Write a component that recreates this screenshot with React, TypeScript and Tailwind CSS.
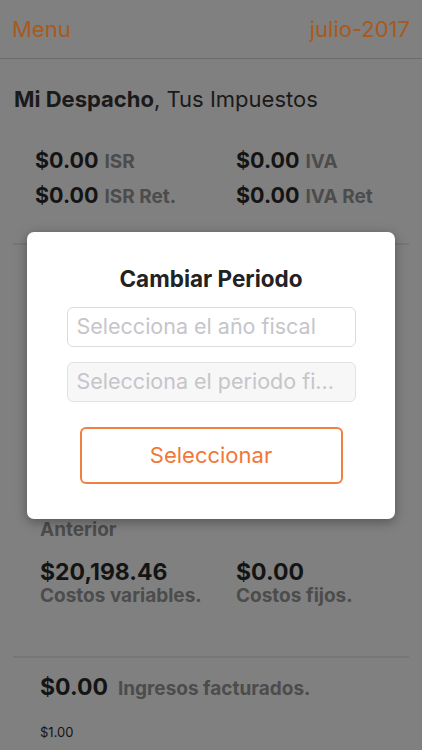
import React from "react";

const font = { fontFamily: "Inter, 'Noto Sans', sans-serif" };

function Amount({ value, label }: { value: string; label: string }) {
  return (
    <div className="flex h-[30px] items-baseline gap-[6px]">
      <span className="text-[21.5px] font-bold leading-[30px] text-[#141414]">{value}</span>
      <span className="text-[19px] font-bold leading-[30px] text-[#4c4c4c]">{label}</span>
    </div>
  );
}

function Stacked({ value, label }: { value: string; label: string }) {
  return (
    <div className="flex flex-col leading-[24px]">
      <span className="text-[23px] font-bold text-[#141414]">{value}</span>
      <span className="text-[19px] font-bold text-[#4c4c4c]">{label}</span>
    </div>
  );
}

export default function App() {
  return (
    <div className="relative h-[750px] w-[422px] overflow-hidden bg-[#808080]" style={font}>
      {/* header */}
      <div className="flex h-[59px] items-center justify-between border-b border-[#6b6b6b] px-3">
        <span className="text-[22px] leading-[28px] text-[#a85a1c]">Menu</span>
        <span className="text-[22px] leading-[28px] text-[#a85a1c]">julio-2017</span>
      </div>

      <div className="px-[14px] pt-[27px]">
        <h1 className="text-[22px] leading-[27px] text-[#1a1a1a]">
          <span className="font-bold">Mi Despacho</span>, Tus Impuestos
        </h1>
      </div>

      <div className="grid grid-cols-[201px_1fr] gap-y-[5px] pl-[35px] pt-[32px] pb-[33px]">
        <Amount value="$0.00" label="ISR" />
        <Amount value="$0.00" label="IVA" />
        <Amount value="$0.00" label="ISR Ret." />
        <Amount value="$0.00" label="IVA Ret" />
      </div>

      <div className="mx-[13px] border-t-2 border-[#767676]" />

      {/* content hidden by the dialog */}
      <div className="grid grid-cols-[196px_1fr] pl-[40px] pt-[252px] leading-[22px]">
        <div className="flex flex-col text-[19px] font-bold text-[#4c4c4c]">
          <span>Utilidad Periodo</span>
          <span>Anterior</span>
        </div>
        <div className="flex flex-col text-[19px] font-bold text-[#4c4c4c]">
          <span>Utilidad Periodo.</span>
        </div>
      </div>

      <div className="grid grid-cols-[196px_1fr] pl-[40px] pt-[19px]">
        <Stacked value="$20,198.46" label="Costos variables." />
        <Stacked value="$0.00" label="Costos fijos." />
      </div>

      <div className="mx-[13px] mt-[48px] border-t-2 border-[#767676]" />

      <div className="pl-[40px] pt-[14px]">
        <div className="flex h-[30px] items-baseline gap-[10px]">
          <span className="text-[23px] font-bold leading-[30px] text-[#141414]">$0.00</span>
          <span className="text-[19px] font-bold leading-[30px] text-[#4c4c4c]">Ingresos facturados.</span>
        </div>
        <div className="pt-[21px] text-[13px] leading-[18px] text-[#141414]">$1.00</div>
      </div>

      {/* dialog */}
      <div className="absolute inset-0 flex items-center justify-center">
        <div className="flex h-[287px] w-[368px] flex-col items-center rounded-[7px] bg-white pt-[33px] shadow-[0_3px_12px_rgba(0,0,0,0.35)]">
          <h2 className="text-[22.5px] font-bold leading-[28px] text-[#222222]">Cambiar Periodo</h2>
          <div className="mt-[14px] flex h-[40px] w-[289px] items-center rounded-[6px] border border-[#dcdcdc] bg-white px-[9px]">
            <span className="text-[21.5px] text-[#c5c5ca]">Selecciona el año fiscal</span>
          </div>
          <div className="mt-[15px] flex h-[40px] w-[289px] items-center rounded-[6px] border border-[#e2e2e2] bg-[#f7f7f7] px-[9px]">
            <span className="text-[21.5px] text-[#c5c5ca]">Selecciona el periodo fi...</span>
          </div>
          <button className="mt-[25px] flex h-[57px] w-[263px] items-center justify-center rounded-[6px] border-2 border-[#f08040] text-[22px] text-[#f07838]">
            Seleccionar
          </button>
        </div>
      </div>
    </div>
  );
}
